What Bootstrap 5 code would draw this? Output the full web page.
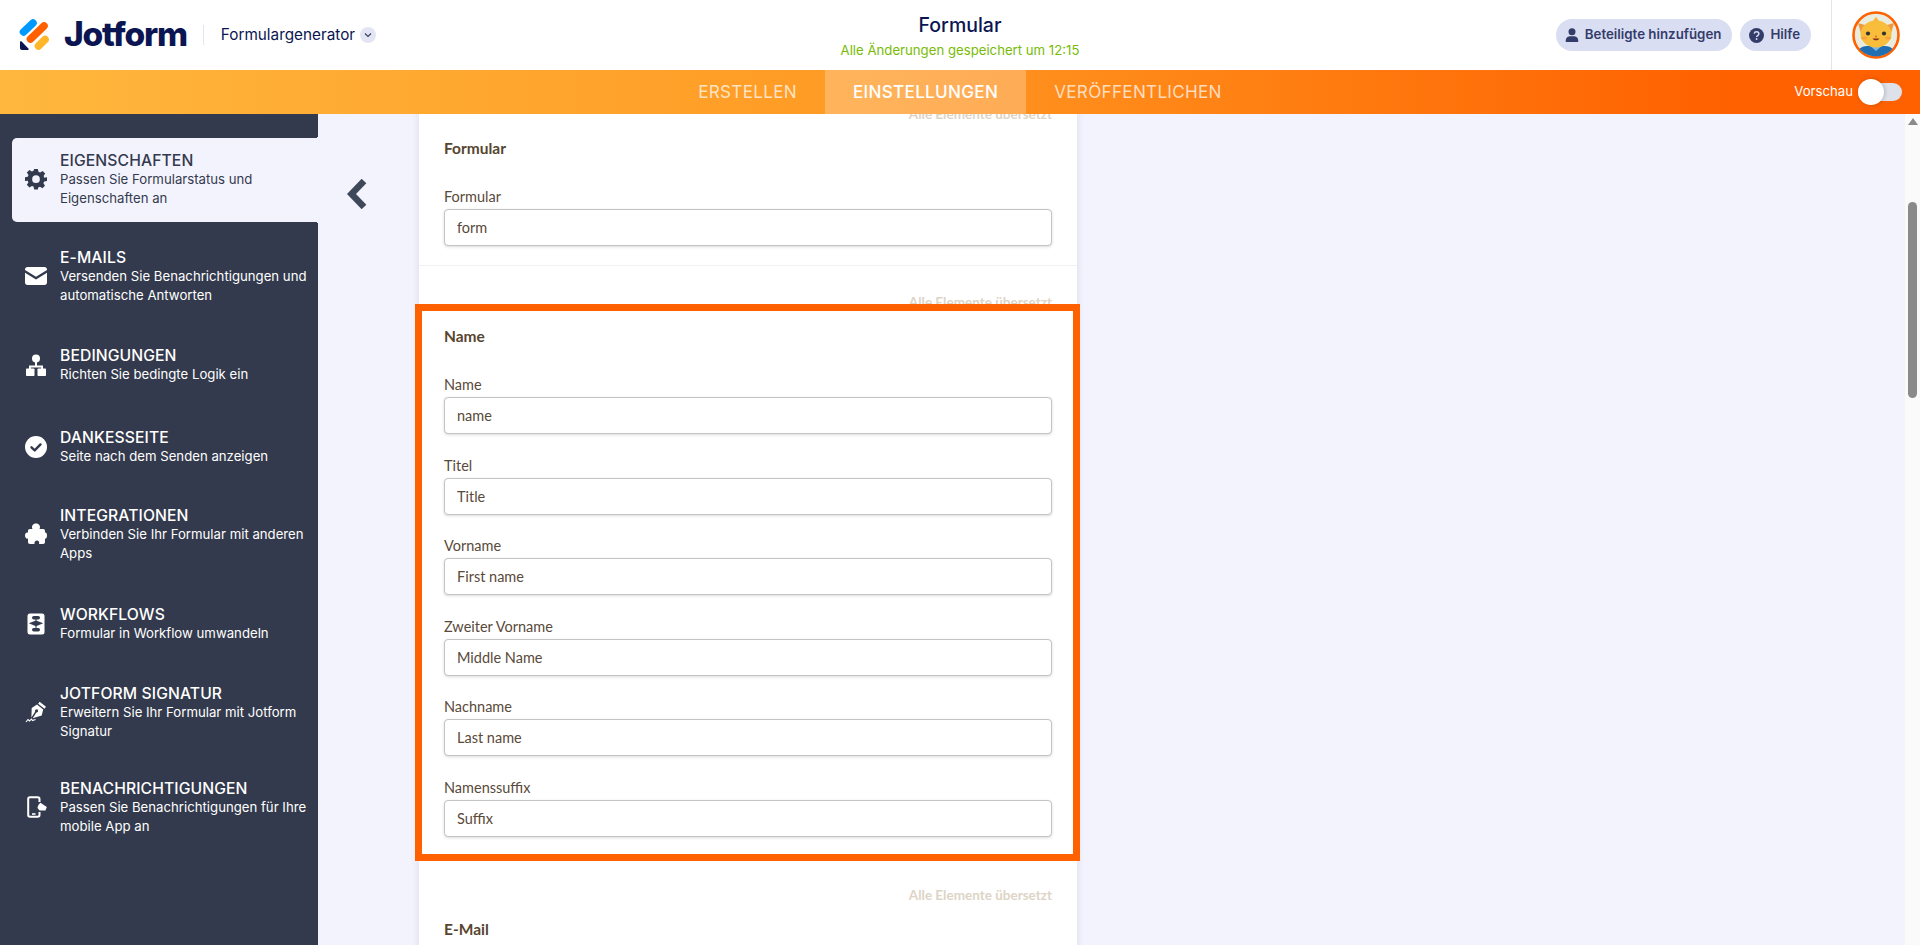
<!DOCTYPE html>
<html lang="de">
<head>
<meta charset="utf-8">
<title>Jotform</title>
<link href="https://cdn.jsdelivr.net/npm/bootstrap@5.3.0/dist/css/bootstrap.min.css" rel="stylesheet">
<style>
html,body{height:100%;overflow:hidden}
body{font-family:Inter,"Liberation Sans",sans-serif;background:#f3f3fe;color:#0a1551}
.jf-page{height:945px}
.jf-top{height:70px;background:#fff;position:relative}
.jf-logo{width:30px;height:32px;margin-left:19px;flex:none}
.jf-word{font-weight:800;font-size:33.5px;letter-spacing:-1.2px;line-height:1;color:#0a1551;margin-left:15px}
.jf-div{width:1px;height:20px;background:#e3e5f0;margin:0 17px 0 16px}
.jf-gen{font-size:15.3px;color:#0a1551}
.jf-chev{width:16px;height:16px;border-radius:50%;background:#e3e5f5;margin-left:5px}
.jf-center{position:absolute;left:0;right:0;top:0;text-align:center}
.jf-ftitle{font-size:19.5px;font-weight:500;line-height:22px;margin-top:14px;color:#0a1551}
.jf-saved{font-size:13.2px;line-height:18px;margin-top:5px;color:#78bb07}
.jf-pill{height:32px;border-radius:16px;background:#dadef3;color:#343c6a;font-size:13.3px;font-weight:600;padding:0 11px 0 9px;gap:6px;border:0}
.jf-vdiv{width:1px;height:70px;background:#e3e5ea;margin-left:20px}
.jf-ava{width:48px;height:48px;margin:0 20px 0 20px;flex:none}
.jf-bar{height:44px;background:linear-gradient(90deg,#ffb73d 0%,#ff9a24 45%,#ff6100 90%);position:relative}
.jf-bar .nav-link{color:rgba(255,255,255,.72);font-size:17.1px;font-weight:400;letter-spacing:.3px;height:44px;padding:0 28px;line-height:44px}
.jf-bar .nav-link.active{background:rgba(255,255,255,.25);color:#fff;font-weight:500}
.jf-prev{position:absolute;right:18px;top:0;height:44px}
.jf-prevtxt{font-size:13.2px;color:#fff;margin-right:5px}
.jf-track{width:44px;height:18px;border-radius:9px;background:#dfe1ea;position:relative}
.jf-knob{position:absolute;left:0;top:-4px;width:26px;height:26px;border-radius:50%;background:#fff;box-shadow:1px 0 4px rgba(0,0,0,.2)}
.jf-body{height:831px}
.jf-side{width:318px;flex:none;background:#343a4d;padding-top:24px}
.jf-item{display:flex;align-items:center;margin-left:12px;padding:12.5px 4px 14px 13px;color:#fff;position:relative}
.jf-item:nth-child(2){margin-top:13px}
.jf-item:nth-child(3){margin-top:14px}
.jf-item:nth-child(4){margin-top:17px}
.jf-item:nth-child(5){margin-top:13px}
.jf-item:nth-child(6){margin-top:15px}
.jf-item:nth-child(7){margin-top:14px}
.jf-item:nth-child(8){margin-top:11px}
.jf-item.active{background:#f3f3fe;color:#343a4d;border-radius:5px 0 0 5px}
.jf-item.active::before,.jf-item.active::after{content:"";position:absolute;right:0;width:3px;height:3px}
.jf-item.active::before{top:-3px;background:radial-gradient(circle at 0 0,#343a4d 3px,#f3f3fe 3.5px)}
.jf-item.active::after{bottom:-3px;background:radial-gradient(circle at 0 100%,#343a4d 3px,#f3f3fe 3.5px)}
.jf-ico{width:22px;height:22px;flex:none;margin-right:13px}
.jf-ttl{font-size:15.7px;font-weight:500;line-height:19px;letter-spacing:.1px}
.jf-sub{font-size:13.2px;line-height:19px;padding-top:.5px}
.jf-main{flex:1 1 auto;min-width:0;overflow:hidden}
.jf-back{width:20px;height:30px;margin:65px 52px 0 29px;flex:none}
.jf-card{width:658px;flex:none;background:#fff;box-shadow:0 0 8px rgba(60,60,100,.12);margin-top:-9px;color:#5a4a3a;font-family:Lato,sans-serif;align-self:flex-start}
.jf-sec{padding:0 25px 19px 25px;position:relative;border-bottom:1px solid #f1f1f5}
.jf-sec + .jf-sec{padding-top:27px}
.jf-sec:last-child{padding-top:29px;border:0}
.jf-alle{font-size:13.5px;font-weight:700;color:#ddd4c6;text-align:right;line-height:18px;height:18px}
.jf-stitle{font-size:15.5px;font-weight:700;line-height:20px;margin:15px 0 29px;color:#57452f}
.jf-field{margin-bottom:21.6px}
.jf-field:last-child{margin-bottom:0}
.jf-field .form-label{font-size:14.5px;line-height:20px;margin:0 0 2px;color:#5a4a3a;display:block}
.jf-field .form-control{height:37px;border:1px solid #c4c4c4;border-radius:4px;padding:0 12px;font-size:14.5px;color:#5a4a3a;box-shadow:0 1px 3px rgba(0,0,0,.14);font-family:Lato,sans-serif}
.jf-frame{position:absolute;left:-4px;right:-3px;top:38px;height:557px;border:7px solid #ff6100;pointer-events:none;z-index:2}
.jf-sb{width:15px;flex:none;background:#fafafa}
.jf-up{width:0;height:0;border-left:5px solid transparent;border-right:5px solid transparent;border-bottom:7px solid #8a8a8a;margin:4px auto 0 2.5px}
.jf-th{width:9px;height:196px;border-radius:5px;background:#8a8a8a;margin:77px 0 0 3px}
</style>
</head>
<body>
<div class="jf-page d-flex flex-column">
  <header class="jf-top d-flex align-items-center flex-none">
    <svg class="jf-logo" viewBox="0 0 30 32" aria-hidden="true">
      <line x1="4.5" y1="13" x2="14" y2="4" stroke="#0099ff" stroke-width="7.6" stroke-linecap="round"/>
      <line x1="11.5" y1="20" x2="25" y2="7" stroke="#ff6100" stroke-width="7.6" stroke-linecap="round"/>
      <line x1="19.5" y1="27" x2="26" y2="20.5" stroke="#ffb629" stroke-width="7.6" stroke-linecap="round"/>
      <path d="M1 23.2c0-.9 1-1.3 1.600-.7l6.800 6.900c.6.600.2 1.600-.7 1.600H3c-1.100 0-2-.9-2-2z" fill="#0a1551"/>
    </svg>
    <span class="jf-word">Jotform</span>
    <span class="jf-div"></span>
    <span class="jf-gen">Formulargenerator</span>
    <span class="jf-chev d-inline-flex align-items-center justify-content-center">
      <svg width="10" height="10" viewBox="0 0 10 10"><path d="M2 3.500l3 3 3-3" fill="none" stroke="#3a4060" stroke-width="1.200"/></svg>
    </span>
    <div class="jf-center">
      <div class="jf-ftitle">Formular</div>
      <div class="jf-saved">Alle Änderungen gespeichert um 12:15</div>
    </div>
    <div class="ms-auto d-flex align-items-center gap-2 position-relative">
      <button class="jf-pill d-flex align-items-center" type="button">
        <svg width="14" height="14" viewBox="0 0 14 14"><circle cx="7" cy="3.800" r="3.500" fill="#343c6a"/><path d="M.8 14v-1.800C.8 9.800 3 8.300 5 8.300h4c2 0 4.200 1.500 4.200 3.900V14z" fill="#343c6a"/></svg>
        Beteiligte hinzufügen
      </button>
      <button class="jf-pill d-flex align-items-center" type="button">
        <svg width="15" height="15" viewBox="0 0 15 15"><circle cx="7.500" cy="7.500" r="7.500" fill="#343c6a"/><path d="M5.200 5.700c.2-1.300 1.200-1.900 2.300-1.900 1.300 0 2.400.8 2.400 2 0 1.800-2.300 1.700-2.300 3.300" fill="none" stroke="#dadef3" stroke-width="1.400"/><circle cx="7.600" cy="11" r=".9" fill="#dadef3"/></svg>
        Hilfe
      </button>
    </div>
    <span class="jf-vdiv position-relative"></span>
    <svg class="jf-ava position-relative" viewBox="0 0 48 48" aria-hidden="true">
      <defs><clipPath id="jfc"><circle cx="24" cy="24" r="21.500"/></clipPath></defs>
      <circle cx="24" cy="24" r="22.500" fill="#e9ecdf" stroke="#ff6100" stroke-width="2.600"/>
      <g clip-path="url(#jfc)">
        <path d="M4 48c0-8 4-13 11-13h18c7 0 11 5 11 13z" fill="#1f6fb2"/>
        <path d="M17 34l7 6 7-6-3-1h-8z" fill="#7db6de"/>
        <path d="M6 12l10 3-6 11zM42 12l-10 3 6 11z" fill="#f0983a"/>
        <path d="M21 10l3-4 3 4z" fill="#f9b233"/>
        <ellipse cx="24" cy="23" rx="15.500" ry="13.500" fill="#f9bd3c"/>
        <circle cx="16" cy="22.500" r="2.100" fill="#333"/><circle cx="32" cy="22.500" r="2.100" fill="#333"/>
        <ellipse cx="12" cy="27" rx="3" ry="1.600" fill="#f7a23a"/><ellipse cx="36" cy="27" rx="3" ry="1.600" fill="#f7a23a"/>
        <path d="M20.500 27.500c1 2.400 6 2.400 7 0z" fill="#8a2c1c"/>
        <circle cx="24" cy="25.500" r=".9" fill="#c8641c"/>
      </g>
    </svg>
  </header>

  <div class="jf-bar">
    <nav class="nav justify-content-center">
      <a class="nav-link" href="#">ERSTELLEN</a>
      <a class="nav-link active" href="#">EINSTELLUNGEN</a>
      <a class="nav-link" href="#">VERÖFFENTLICHEN</a>
    </nav>
    <div class="jf-prev d-flex align-items-center">
      <span class="jf-prevtxt">Vorschau</span>
      <span class="jf-track"><span class="jf-knob"></span></span>
    </div>
  </div>

  <div class="jf-body d-flex">
    <aside class="jf-side">
      <div class="jf-item active">
        <svg class="jf-ico" viewBox="0 0 24 24"><path fill="#343a4d" fill-rule="evenodd" d="M10 1h4l.7 3.100 1.800.8 2.700-1.700 2.800 2.800-1.700 2.700.8 1.800L24 10.200v3.900l-3.100.7-.8 1.800 1.700 2.700-2.800 2.800-2.700-1.700-1.800.8L14 23.500h-4l-.7-3.200-1.800-.8-2.700 1.700L2 18.400l1.700-2.700-.8-1.800L0 14.100v-3.900l3-.7.800-1.800L2 5l2.800-2.800 2.700 1.700 1.800-.8zM12 8a4.200 4.200 0 100 8.400A4.200 4.200 0 0012 8z"/></svg>
        <div><div class="jf-ttl">EIGENSCHAFTEN</div><div class="jf-sub">Passen Sie Formularstatus und<br>Eigenschaften an</div></div>
      </div>
      <div class="jf-item">
        <svg class="jf-ico" viewBox="0 0 22 22"><path fill="#fff" d="M0 4.500C0 3.100 1.100 2 2.500 2h17C20.900 2 22 3.100 22 4.500v.6l-11 6.700L0 5.100zM0 7.800l11 6.700 11-6.700v9.700c0 1.400-1.100 2.500-2.500 2.500h-17C1.100 20 0 18.900 0 17.500z"/></svg>
        <div><div class="jf-ttl">E-MAILS</div><div class="jf-sub">Versenden Sie Benachrichtigungen und<br>automatische Antworten</div></div>
      </div>
      <div class="jf-item">
        <svg class="jf-ico" viewBox="0 0 22 22"><circle cx="11" cy="4.500" r="4" fill="#fff"/><path d="M10 7h2v4.500h6v4h-2v-2H6v2H4v-4h6z" fill="#fff"/><rect x="1" y="14.500" width="8.500" height="7.500" rx=".8" fill="#fff"/><rect x="12.500" y="14.500" width="8.500" height="7.500" rx=".8" fill="#fff"/></svg>
        <div><div class="jf-ttl">BEDINGUNGEN</div><div class="jf-sub">Richten Sie bedingte Logik ein</div></div>
      </div>
      <div class="jf-item">
        <svg class="jf-ico" viewBox="0 0 22 22"><circle cx="11" cy="11" r="11" fill="#fff"/><path d="M6.500 11.300l3.200 3.100 5.800-6" fill="none" stroke="#343a4d" stroke-width="2.400" stroke-linecap="round" stroke-linejoin="round"/></svg>
        <div><div class="jf-ttl">DANKESSEITE</div><div class="jf-sub">Seite nach dem Senden anzeigen</div></div>
      </div>
      <div class="jf-item">
        <svg class="jf-ico" viewBox="0 0 22 22"><path fill="#fff" d="M7.500 6C6 3 8 .5 11 .5S16 3 14.500 6H18c1.500 0 2 .8 2 2v1.500c1-.5 2 .5 2 3s-1 3.500-2 3V19c0 1.300-.7 2-2 2h-4c.8-2-.5-3.500-2-3.500S9 19 9.500 21H5c-1.300 0-2-.7-2-2v-3.500c-1.500.5-3-.5-3-3s1.500-3.500 3-3V8c0-1.200.7-2 2-2z"/></svg>
        <div><div class="jf-ttl">INTEGRATIONEN</div><div class="jf-sub">Verbinden Sie Ihr Formular mit anderen<br>Apps</div></div>
      </div>
      <div class="jf-item">
        <svg class="jf-ico" viewBox="0 0 22 22"><rect x="2.500" y="0.500" width="17" height="21" rx="2.500" fill="#fff"/><path d="M10.500 5h1v11h-1z" fill="#343a4d"/><rect x="7" y="3" width="8" height="3.500" rx="1.700" fill="#343a4d"/><path d="M3.800 10.300L11 7.400l7.200 2.900L11 13.200z" fill="#343a4d"/><rect x="7" y="15" width="8" height="3.500" rx="1.700" fill="#343a4d"/></svg>
        <div><div class="jf-ttl">WORKFLOWS</div><div class="jf-sub">Formular in Workflow umwandeln</div></div>
      </div>
      <div class="jf-item">
        <svg class="jf-ico" viewBox="0 0 22 22"><path fill="#fff" fill-rule="evenodd" d="M14.600.8l6.400 5-1.500 1.900-6.400-5zM12 3.600l6.200 5-1.500 5.800-9 2.800 3.700-5.700a1.600 1.600 0 10-1.300-.8l-3.700 5.700L6.700 7z"/><path d="M1 21l2-2.500 1.500 1.500 2-2 1 1.500 3-1" fill="none" stroke="#fff" stroke-width="1.100"/></svg>
        <div><div class="jf-ttl">JOTFORM SIGNATUR</div><div class="jf-sub">Erweitern Sie Ihr Formular mit Jotform<br>Signatur</div></div>
      </div>
      <div class="jf-item">
        <svg class="jf-ico" viewBox="0 0 22 22"><path d="M14.500 6V3c0-1-.8-1.800-1.800-1.800H5C4 1.200 3.200 2 3.200 3v16c0 1 .8 1.800 1.800 1.800h7.700c1 0 1.800-.8 1.800-1.800v-3" fill="none" stroke="#fff" stroke-width="2"/><path d="M7 18h3.500" stroke="#fff" stroke-width="1.600"/><path d="M15.500 6.800L21.800 11l-1.300 3.600h-6l-2-2.500c.2-2 1.400-4.500 3-5.300z" fill="#fff"/></svg>
        <div><div class="jf-ttl">BENACHRICHTIGUNGEN</div><div class="jf-sub">Passen Sie Benachrichtigungen für Ihre<br>mobile App an</div></div>
      </div>
    </aside>

    <main class="jf-main d-flex">
      <svg class="jf-back" viewBox="0 0 20 30"><path d="M17 2L4.500 15 17 28" fill="none" stroke="#3f4858" stroke-width="6.500"/></svg>
      <div class="jf-card">
        <section class="jf-sec">
          <div class="jf-alle">Alle Elemente übersetzt</div>
          <div class="jf-stitle">Formular</div>
          <div class="jf-field"><label class="form-label">Formular</label><input class="form-control" value="form"></div>
        </section>
        <section class="jf-sec">
          <div class="jf-frame"></div>
          <div class="jf-alle">Alle Elemente übersetzt</div>
          <div class="jf-stitle">Name</div>
          <div class="jf-field"><label class="form-label">Name</label><input class="form-control" value="name"></div>
          <div class="jf-field"><label class="form-label">Titel</label><input class="form-control" value="Title"></div>
          <div class="jf-field"><label class="form-label">Vorname</label><input class="form-control" value="First name"></div>
          <div class="jf-field"><label class="form-label">Zweiter Vorname</label><input class="form-control" value="Middle Name"></div>
          <div class="jf-field"><label class="form-label">Nachname</label><input class="form-control" value="Last name"></div>
          <div class="jf-field"><label class="form-label">Namenssuffix</label><input class="form-control" value="Suffix"></div>
        </section>
        <section class="jf-sec">
          <div class="jf-alle">Alle Elemente übersetzt</div>
          <div class="jf-stitle">E-Mail</div>
        </section>
      </div>
    </main>

    <div class="jf-sb">
      <div class="jf-up"></div>
      <div class="jf-th"></div>
    </div>
  </div>
</div>
<script src="https://cdn.jsdelivr.net/npm/bootstrap@5.3.0/dist/js/bootstrap.bundle.min.js"></script>
</body>
</html>
